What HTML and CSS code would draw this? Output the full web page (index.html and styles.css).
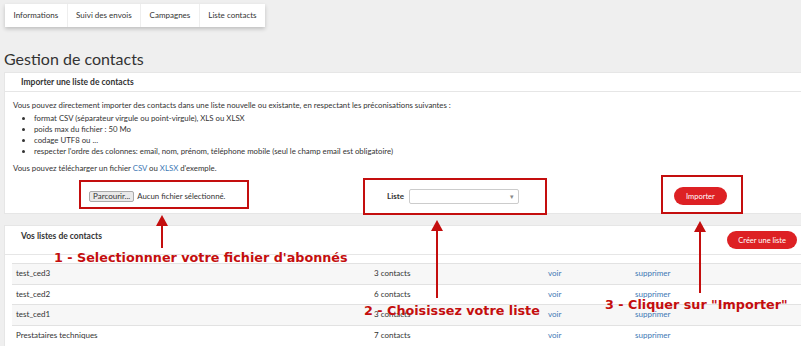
FILE: index.html
```html
<!DOCTYPE html>
<html lang="fr">

<head>
    <meta charset="UTF-8">
    <meta name="viewport" content="width=device-width, initial-scale=1.0">
    <title>Gestion de contacts</title>
    <link rel="stylesheet" href="styles.css">
</head>

<body>
    <div class="tabs">
        <a href="#">Informations</a>
        <a href="#">Suivi des envois</a>
        <a href="#">Campagnes</a>
        <a href="#">Liste contacts</a>
    </div>

    <h1 class="page-title">Gestion de contacts</h1>

    <div class="panel">
        <div class="panel-head">Importer une liste de contacts</div>
        <div class="panel-body">
            <p>Vous pouvez directement importer des contacts dans une liste nouvelle ou existante, en respectant les préconisations suivantes :</p>
            <ul>
                <li>format CSV (séparateur virgule ou point-virgule), XLS ou XLSX</li>
                <li>poids max du fichier : 50 Mo</li>
                <li>codage UTF8 ou ...</li>
                <li>respecter l'ordre des colonnes: email, nom, prénom, téléphone mobile (seul le champ email est obligatoire)</li>
            </ul>
            <p class="dl">Vous pouvez télécharger un fichier <a href="#">CSV</a> ou <a href="#">XLSX</a> d'exemple.</p>

            <div class="import-row">
                <div class="file-field">
                    <span class="file-btn">Parcourir...</span>
                    <span class="file-name">Aucun fichier sélectionné.</span>
                </div>
                <div class="list-field">
                    <label>Liste</label>
                    <div class="select"><span class="caret">▾</span></div>
                </div>
                <div class="submit-field">
                    <button class="btn-red">Importer</button>
                </div>
            </div>
        </div>
    </div>

    <div class="panel lists">
        <div class="panel-head">
            <span>Vos listes de contacts</span>
            <button class="btn-red create">Créer une liste</button>
        </div>
        <div class="table">
            <div class="row odd"><span>test_ced3</span><span>3 contacts</span><a href="#">voir</a><a href="#">supprimer</a></div>
            <div class="row"><span>test_ced2</span><span>6 contacts</span><a href="#">voir</a><a href="#">supprimer</a></div>
            <div class="row odd"><span>test_ced1</span><span>3 contacts</span><a href="#">voir</a><a href="#">supprimer</a></div>
            <div class="row"><span>Prestataires techniques</span><span>7 contacts</span><a href="#">voir</a><a href="#">supprimer</a></div>
        </div>
    </div>

    <!-- annotations -->
    <div class="note-box box1"></div>
    <div class="note-box box2"></div>
    <div class="note-box box3"></div>
    <svg class="arrows" width="801" height="346">
        <g fill="#c40e0e" stroke="#c40e0e">
            <line x1="162" y1="222" x2="162" y2="248" stroke-width="2" />
            <polygon points="162,215 156,226 168,226" stroke="none" />
            <line x1="437" y1="227" x2="437" y2="298" stroke-width="2" />
            <polygon points="437,220 431,231 443,231" stroke="none" />
            <line x1="700" y1="228" x2="700" y2="293" stroke-width="2" />
            <polygon points="700,221 694,232 706,232" stroke="none" />
        </g>
    </svg>
    <div class="note-text t1">1 - Selectionnner votre fichier d'abonnés</div>
    <div class="note-text t2">2 - Choisissez votre liste</div>
    <div class="note-text t3">3 - Cliquer sur "Importer"</div>
</body>

</html>
```

FILE: styles.css
```css
body {
    font-family: Lato, 'Open Sans', sans-serif;
    background: #efefef;
    margin: 0;
    color: #333;
    position: relative;
    overflow: hidden;
    width: 801px;
    height: 346px;
}

a {
    color: #3c78b4;
    text-decoration: none;
}

.tabs {
    display: inline-flex;
    margin: 4px 0 0 5px;
    background: white;
    box-shadow: 0 2px 4px rgba(0, 0, 0, 0.2);
}

.tabs a {
    color: #333;
    font-size: 8px;
    line-height: 23px;
    padding: 0 8.5px;
    border-right: 1px solid #eee;
}

.tabs a:last-child {
    border-right: none;
}

.page-title {
    font-size: 16px;
    font-weight: 400;
    margin: 21px 0 3px 4px;
    line-height: 21px;
    color: #333;
}

.panel {
    background: white;
    margin: 0 -20px 0 4px;
    border: 1px solid #e6e6e6;
}

.panel-head {
    font-size: 8.5px;
    font-weight: bold;
    padding: 0 16px;
    height: 18px;
    line-height: 18px;
    border-bottom: 1px solid #e6e6e6;
}

.panel-body {
    padding: 8px 8px 3px;
    font-size: 7.8px;
    line-height: 11px;
}

.panel-body p {
    margin: 0 0 2px;
}

.panel-body ul {
    margin: 0;
    padding-left: 21px;
}

.panel-body .dl {
    margin-top: 6px;
}

.import-row {
    display: grid;
    grid-template-columns: 354px 300px 100px;
    align-items: center;
    height: 28px;
    margin-top: 8px;
}

.file-field {
    display: flex;
    align-items: center;
    padding-left: 76px;
    gap: 3px;
    font-size: 7.8px;
}

.file-btn {
    background: #e9e9e9;
    border: 1px solid #aaa;
    border-radius: 2px;
    padding: 0 3px;
    font-size: 8px;
    line-height: 9px;
}

.list-field {
    display: flex;
    align-items: center;
    padding-left: 20px;
    gap: 5px;
}

.list-field label {
    font-size: 8px;
    font-weight: bold;
}

.select {
    width: 108px;
    height: 13px;
    border: 1px solid #ccc;
    border-radius: 2px;
    position: relative;
}

.caret {
    position: absolute;
    right: 4px;
    top: 1px;
    font-size: 7px;
    color: #888;
}

.btn-red {
    background: #dd2124;
    color: white;
    border: none;
    border-radius: 10px;
    font-family: Lato, sans-serif;
    font-size: 7.5px;
    height: 18px;
    padding: 0 12px;
}

.submit-field {
    padding-left: 7px;
}

.lists {
    margin-top: 11px;
    height: 200px;
}

.lists .panel-head {
    display: flex;
    justify-content: space-between;
    align-items: flex-start;
    height: 24px;
    line-height: 12px;
    padding-top: 4px;
    padding-right: 23px;
}

.create {
    font-weight: normal;
    padding: 0 11px;
    margin-top: 1px;
}

.table {
    margin: 8px 0 0 7px;
}

.row {
    display: grid;
    grid-template-columns: 358px 174px 87px auto;
    font-size: 8px;
    height: 19.5px;
    line-height: 19.5px;
    padding-left: 4px;
    border-top: 1px solid #e2e2e2;
}

.row.odd {
    background: #f7f7f7;
}

.note-box {
    position: absolute;
    border: 2px solid #c40e0e;
    box-sizing: border-box;
}

.box1 {
    left: 79px;
    top: 180px;
    width: 170px;
    height: 29px;
}

.box2 {
    left: 363px;
    top: 178px;
    width: 184px;
    height: 37px;
}

.box3 {
    left: 661px;
    top: 175px;
    width: 82px;
    height: 39px;
}

.arrows {
    position: absolute;
    left: 0;
    top: 0;
}

.note-text {
    position: absolute;
    font-family: 'DejaVu Sans', sans-serif;
    font-weight: bold;
    font-size: 12.75px;
    color: #c40e0e;
    white-space: nowrap;
    line-height: 14px;
}

.t1 {
    left: 54px;
    top: 251px;
}

.t2 {
    left: 364px;
    top: 304px;
}

.t3 {
    left: 605px;
    top: 298px;
}
```
